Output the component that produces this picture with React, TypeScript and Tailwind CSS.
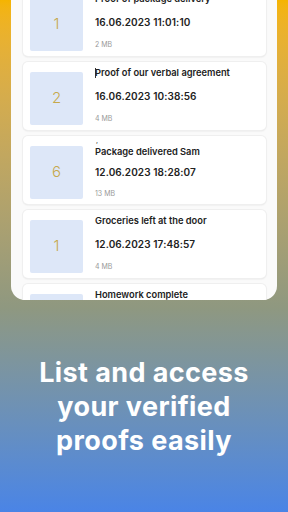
type Proof = {
  id: number;
  count: number;
  title: string;
  date: string;
  size: string;
  mark?: string;
};

const proofs: Proof[] = [
  { id: 1, count: 1, title: "Proof of package delivery", date: "16.06.2023 11:01:10", size: "2 MB" },
  { id: 2, count: 2, title: "Proof of our verbal agreement", date: "16.06.2023 10:38:56", size: "4 MB", mark: "bar" },
  { id: 3, count: 6, title: "Package delivered Sam", date: "12.06.2023 18:28:07", size: "13 MB", mark: "comma" },
  { id: 4, count: 1, title: "Groceries left at the door", date: "12.06.2023 17:48:57", size: "4 MB" },
  { id: 5, count: 3, title: "Homework complete", date: "11.06.2023 09:12:44", size: "2 MB" },
];

export default function App() {
  return (
    <div
      className="w-[288px] h-[512px] overflow-hidden bg-linear-to-b from-[#f5b400] via-[#8f9880] via-60% to-[#4a84e6] flex flex-col"
      style={{ fontFamily: "Inter, 'Noto Sans', sans-serif" }}
    >
      <div className="mx-[11px] h-[300px] shrink-0 overflow-hidden rounded-b-[14px] bg-[#fafafa]">
        <div className="mt-[-12px] flex flex-col gap-[6px] pl-[12px] pr-[11px]">
          {proofs.map(p => (
            <ProofCard key={p.id} p={p} />
          ))}
        </div>
      </div>

      <h1 className="mt-[56px] text-center text-[27px] leading-[34px] font-bold text-white tracking-[0.4px]">
        List and access
        <br />
        your verified
        <br />
        proofs easily
      </h1>
    </div>
  );
}

function ProofCard({ p }: { p: Proof }) {
  const comma = p.mark === "comma";
  return (
    <div className="flex h-[68px] shrink-0 items-start gap-[12px] rounded-[5px] bg-white px-[7px] shadow-[0_1px_2px_rgba(0,0,0,0.12)] ring-1 ring-[#efefef]">
      <div className="mt-[10px] flex h-[53px] w-[53px] shrink-0 items-center justify-center rounded-[2px] bg-[#dde7f8] text-[15px] font-light text-[#c6a94c]">
        {p.count}
      </div>
      <div className="relative flex flex-col pt-[4px] text-[#222]">
        {comma && (
          <span className="absolute left-[1px] top-[1px] text-[7px] leading-none text-[#333]">,</span>
        )}
        <div
          className={`flex items-center text-[9.3px] leading-[14px] font-semibold whitespace-nowrap ${
            comma ? "mt-[5px]" : ""
          }`}
        >
          {p.mark === "bar" && <span className="mr-[-1px] inline-block h-[10px] w-px bg-[#333]" />}
          {p.title}
        </div>
        <div
          className={`text-[10px] leading-[14px] font-semibold tracking-[0.1px] ${
            comma ? "mt-[6px]" : "mt-[9px]"
          }`}
        >
          {p.date}
        </div>
        <div
          className={`text-[7px] leading-[9px] text-[#999] ${comma ? "mt-[10px]" : "mt-[11px]"}`}
        >
          {p.size}
        </div>
      </div>
    </div>
  );
}
